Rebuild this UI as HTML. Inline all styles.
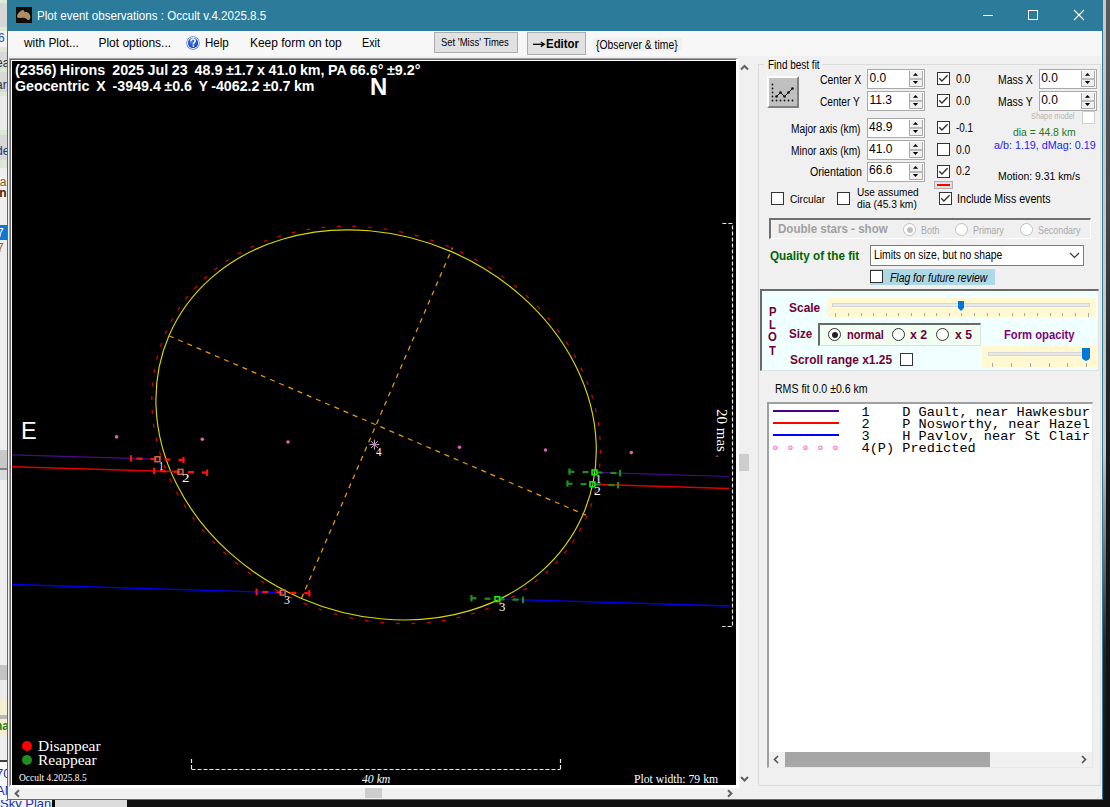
<!DOCTYPE html>
<html><head><meta charset="utf-8">
<style>
*{margin:0;padding:0;box-sizing:border-box}
html,body{width:1110px;height:807px;overflow:hidden;background:#111;font-family:"Liberation Sans",sans-serif;}
.a{position:absolute;white-space:pre;line-height:1}
.r{position:absolute}
.btn{position:absolute;background:#e1e1e1;border:1px solid #adadad}
.spin{position:absolute;width:58px;height:20px;background:#fff;border:1px solid #a9a9a9}
.spin .u{position:absolute;left:41px;top:1px;width:14px;height:16px;background:#f0f0f0;border:1px solid #c8c8c8}
.cb{position:absolute;width:13px;height:13px;border:1px solid #333;background:#fff}
.rd{position:absolute;width:13px;height:13px;border:1px solid #333;border-radius:50%;background:#fff}
</style></head><body>
<!-- background strips -->
<div class="r" style="left:0;top:0px;width:7px;height:3px;background:#dde8d5"></div><div class="r" style="left:0;top:3px;width:7px;height:24px;background:#d6d6d6"></div><div class="r" style="left:0;top:27px;width:7px;height:4px;background:#dde8d5"></div><div class="r" style="left:0;top:31px;width:7px;height:16px;background:#f2f2f2"></div><div class="r" style="left:0;top:47px;width:7px;height:5px;background:#dde8d5"></div><div class="r" style="left:0;top:52px;width:7px;height:16px;background:#d8d8d8"></div><div class="r" style="left:0;top:68px;width:7px;height:4px;background:#dde8d5"></div><div class="r" style="left:0;top:72px;width:7px;height:20px;background:#d8d8d8"></div><div class="r" style="left:0;top:92px;width:7px;height:4px;background:#dde8d5"></div><div class="r" style="left:0;top:96px;width:7px;height:34px;background:#ececec"></div><div class="r" style="left:0;top:130px;width:7px;height:5px;background:#dde8d5"></div><div class="r" style="left:0;top:135px;width:7px;height:25px;background:#d8d8d8"></div><div class="r" style="left:0;top:160px;width:7px;height:8px;background:#dde8d5"></div><div class="r" style="left:0;top:168px;width:7px;height:57px;background:#efefef"></div><div class="r" style="left:0;top:225px;width:7px;height:15px;background:#0a78d4"></div><div class="r" style="left:0;top:240px;width:7px;height:210px;background:#eeeeee"></div><div class="r" style="left:0;top:450px;width:7px;height:18px;background:#c8c8c8"></div><div class="r" style="left:0;top:468px;width:7px;height:2px;background:#808080"></div><div class="r" style="left:0;top:470px;width:7px;height:10px;background:#dadada"></div><div class="r" style="left:0;top:480px;width:7px;height:185px;background:#eeeeee"></div><div class="r" style="left:0;top:665px;width:7px;height:15px;background:#c4c4c4"></div><div class="r" style="left:0;top:680px;width:7px;height:20px;background:#ececec"></div><div class="r" style="left:0;top:700px;width:7px;height:15px;background:#f4efd0"></div><div class="r" style="left:0;top:715px;width:7px;height:4px;background:#b8b8b8"></div><div class="r" style="left:0;top:719px;width:7px;height:16px;background:#f4efd0"></div><div class="r" style="left:0;top:735px;width:7px;height:25px;background:#eeeeee"></div><div class="r" style="left:0;top:760px;width:7px;height:2px;background:#404040"></div><div class="r" style="left:0;top:762px;width:7px;height:38px;background:#f8f8f8"></div><div class="a" style="left:-2px;top:31px;font:12px 'Liberation Sans';color:#2050c0">6</div><div class="a" style="left:-4px;top:56px;font:12px 'Liberation Sans';color:#333">ea</div><div class="a" style="left:-4px;top:78px;font:12px 'Liberation Sans';color:#333">ar</div><div class="a" style="left:-4px;top:144px;font:12px 'Liberation Sans';color:#203080">de</div><div class="a" style="left:-3px;top:175px;font:12px 'Liberation Sans';color:#806020">la</div><div class="a" style="left:-4px;top:186px;font:bold 12px 'Liberation Sans';color:#402010">in</div><div class="a" style="left:-3px;top:226px;font:12px 'Liberation Sans';color:#fff">7</div><div class="a" style="left:-3px;top:241px;font:12px 'Liberation Sans';color:#a06010">7</div><div class="a" style="left:-5px;top:719px;font:bold 12px 'Liberation Sans';color:#208020">na</div><div class="a" style="left:-4px;top:766px;font:13px 'Liberation Sans';color:#2030b0">70</div><div class="a" style="left:-4px;top:783px;font:13px 'Liberation Sans';color:#2030b0">AM</div>
<div class="r" style="left:1103px;top:0;width:3px;height:450px;background:#c8c8c8"></div>
<div class="r" style="left:1106px;top:0;width:4px;height:807px;background:linear-gradient(#5a5a5a 0,#4a4a4a 200px,#2a2a2a 350px,#151515 500px,#111 807px)"></div>
<div class="r" style="left:1103px;top:450px;width:3px;height:357px;background:linear-gradient(#c8c8c8,#222 200px,#111)"></div>
<div class="r" style="left:0;top:800px;width:1110px;height:7px;background:#111"></div><div class="r" style="left:0;top:800px;width:52px;height:7px;background:#f4f4f4;overflow:hidden"><div class="a" style="left:0;top:-4px;font:13px 'Liberation Sans';color:#2030b0">Sky Plane</div></div><div class="r" style="left:52px;top:800px;width:3px;height:7px;background:#000"></div><div class="r" style="left:55px;top:800px;width:72px;height:7px;background:#dcdcdc"></div>

<!-- window -->
<div class="r" style="left:7px;top:0;width:1096px;height:800px;background:#f0f0f0;border:1px solid #2d7b9a;border-top:none"></div>
<div class="r" style="left:7px;top:0;width:1096px;height:31px;background:#2d7b9a"></div>
<svg class="r" style="left:0;top:0" width="1110" height="32"><rect x="983" y="15" width="10" height="1" fill="#fff"/><rect x="1028.5" y="10.5" width="9" height="9" fill="none" stroke="#fff" stroke-width="1"/><path d="M1074 10 L1084 20 M1084 10 L1074 20" stroke="#fff" stroke-width="1.1"/></svg>
<div class="r" style="left:16px;top:7px;width:16px;height:16px;background:#0e0c09"></div>
<svg class="r" style="left:16px;top:7px" width="16" height="16"><path d="M1.1 9.2 C1.5 6.5 4.5 3.5 6.9 3.1 C8 3 8.3 4.5 8.7 5.2 C9.5 4.8 10.5 4.8 11.4 5.2 C13 5.8 14.4 8 14.4 9.9 C14.4 11.5 13.5 13 12.6 12.9 C11 12.8 10 11 8.7 10.9 C6.5 10.8 4.5 11 3 10.9 C1.8 10.8 1 10.2 1.1 9.2 Z" fill="#b08c62"/></svg>
<div class="r" style="left:8px;top:31px;width:1094px;height:25px;background:#f7f7f7"></div>
<svg class="r" style="left:185px;top:35px" width="16" height="16"><defs><radialGradient id="hg" cx="40%" cy="35%" r="70%"><stop offset="0" stop-color="#4a8af0"/><stop offset="1" stop-color="#0a3ab8"/></radialGradient></defs><circle cx="8" cy="8" r="6.7" fill="#4a6cc8"/><circle cx="8" cy="8" r="5.6" fill="none" stroke="#d8e8ff" stroke-width="1.1"/><circle cx="8" cy="8" r="4.9" fill="url(#hg)"/><path d="M5.9 6.2 C5.9 4.6 7.1 4 8.1 4 C9.4 4 10.2 4.8 10.2 5.9 C10.2 7.3 8.6 7.5 8.4 8.8 V9.4" fill="none" stroke="#fff" stroke-width="1.5"/><rect x="7.6" y="10.3" width="1.6" height="1.5" fill="#fff"/></svg>
<div class="btn" style="left:434px;top:32px;width:84px;height:21px"></div>
<div class="btn" style="left:527px;top:32px;width:59px;height:23px"></div><svg class="r" style="left:0;top:0" width="600" height="60"><path d="M533 44.3 H543" stroke="#000" stroke-width="1.3"/><path d="M540.8 42 L544.3 44.3 L540.8 46.6" fill="none" stroke="#000" stroke-width="1.3"/></svg>
<div class="r" style="left:593px;top:38px;width:89px;height:13px;background:#f0f0f0"></div>

<!-- plot panel -->
<div class="r" style="left:9px;top:58px;width:730px;height:730px;border-top:1px solid #a0a0a0;border-left:1px solid #a0a0a0;border-bottom:3px solid #fff;border-right:3px solid #fff;box-shadow:inset 1px 1px 0 #696969, inset 2px 2px 0 #fff"></div>
<div id="plot" class="r" style="left:12px;top:61px;width:724px;height:724px;background:#000;overflow:hidden">
<svg width="724" height="724" viewBox="12 61 724 724" style="position:absolute;left:0;top:0">
<path d="M587.08 515.69L585.45 519.34M581.26 527.80L579.33 531.31M574.43 539.41L572.23 542.75M566.64 550.47L564.17 553.61M557.92 560.91L555.20 563.84M548.30 570.70L545.36 573.40M537.85 579.77L534.70 582.24M526.60 588.09L523.27 590.30M514.61 595.61L511.12 597.57M501.95 602.29L498.33 603.99M488.67 608.11L484.93 609.55M474.84 613.04L471.02 614.21M460.53 617.04L456.63 617.95M445.81 620.10L441.86 620.76M430.75 622.22L426.77 622.61M415.42 623.36L411.42 623.50M399.90 623.54L395.91 623.43M384.27 622.74L380.29 622.39M368.61 620.99L364.65 620.39M352.98 618.27L349.07 617.44M337.47 614.61L333.61 613.55M322.15 610.03L318.36 608.75M307.09 604.55L303.39 603.04M292.37 598.19L288.76 596.47M278.07 590.99L274.56 589.06M264.24 582.98L260.86 580.85M250.96 574.21L247.71 571.88M238.29 564.71L235.19 562.19M226.30 554.53L223.35 551.83M215.03 543.72L212.26 540.84M204.55 532.34L201.96 529.29M194.90 520.43L192.51 517.23M186.14 508.07L183.96 504.71M178.30 495.30L176.35 491.80M171.42 482.19L169.72 478.57M165.53 468.80L164.09 465.07M160.67 455.20L159.50 451.37M156.85 441.45L155.96 437.55M154.10 427.62L153.51 423.66M152.42 413.78L152.14 409.79M151.83 399.98L151.87 395.98M152.33 386.31L152.69 382.33M153.92 372.82L154.60 368.88M156.59 359.58L157.59 355.71M160.33 346.66L161.65 342.88M165.12 334.11L166.75 330.46M170.94 322.00L172.87 318.49M177.77 310.39L179.97 307.05M185.56 299.33L188.03 296.19M194.28 288.89L197.00 285.96M203.90 279.10L206.84 276.40M214.35 270.03L217.50 267.56M225.60 261.71L228.93 259.50M237.59 254.19L241.08 252.23M250.25 247.51L253.87 245.81M263.53 241.69L267.27 240.25M277.36 236.76L281.18 235.59M291.67 232.76L295.57 231.85M306.39 229.70L310.34 229.04M321.45 227.58L325.43 227.19M336.78 226.44L340.78 226.30M352.30 226.26L356.29 226.37M367.93 227.06L371.91 227.41M383.59 228.81L387.55 229.41M399.22 231.53L403.13 232.36M414.73 235.19L418.59 236.25M430.05 239.77L433.84 241.05M445.11 245.25L448.81 246.76M459.83 251.61L463.44 253.33M474.13 258.81L477.64 260.74M487.96 266.82L491.34 268.95M501.24 275.59L504.49 277.92M513.91 285.09L517.01 287.61M525.90 295.27L528.85 297.97M537.17 306.08L539.94 308.96M547.65 317.46L550.24 320.51M557.30 329.37L559.69 332.57M566.06 341.73L568.24 345.09M573.90 354.50L575.85 358.00M580.78 367.61L582.48 371.23M586.67 381.00L588.11 384.73M591.53 394.60L592.70 398.43M595.35 408.35L596.24 412.25M598.10 422.18L598.69 426.14M599.78 436.02L600.06 440.01M600.37 449.82L600.33 453.82M599.87 463.49L599.51 467.47M598.28 476.98L597.60 480.92M595.61 490.22L594.61 494.09M591.87 503.14L590.55 506.92" stroke="#d00000" stroke-width="1.3" fill="none"/>
<ellipse cx="376.1" cy="424.9" rx="225.5" ry="188.9" transform="rotate(23.28 376.1 424.9)" fill="none" stroke="#d8d800" stroke-width="1.15"/>
<line x1="169.0" y1="335.8" x2="586.0" y2="515.2" stroke="#e89a10" stroke-width="1.25" stroke-dasharray="5 5"/>
<line x1="301.4" y1="598.4" x2="452.5" y2="247.5" stroke="#e89a10" stroke-width="1.25" stroke-dasharray="5 5"/>
<line x1="12.0" y1="454.8" x2="157.0" y2="459.2" stroke="#4a0a88" stroke-width="1.2" />
<line x1="595.0" y1="472.4" x2="729.0" y2="476.5" stroke="#4a0a88" stroke-width="1.2" />
<line x1="12.0" y1="466.7" x2="180.5" y2="471.8" stroke="#e00000" stroke-width="1.6" />
<line x1="592.5" y1="484.3" x2="729.0" y2="488.5" stroke="#e00000" stroke-width="1.6" />
<line x1="12.0" y1="584.5" x2="282.7" y2="592.6" stroke="#0000ee" stroke-width="1.35" />
<line x1="497.4" y1="599.1" x2="729.0" y2="606.0" stroke="#0000ee" stroke-width="1.35" />
<line x1="184.4" y1="460.0" x2="130.0" y2="458.4" stroke="#ff1010" stroke-width="2.3" stroke-dasharray="6 8"/>
<line x1="131.0" y1="455.2" x2="131.0" y2="461.6" stroke="#ff1010" stroke-width="2.2"/>
<line x1="183.4" y1="456.8" x2="183.4" y2="463.2" stroke="#ff1010" stroke-width="2.2"/>
<rect x="155.1" y="456.8" width="4.8" height="4.8" fill="none" stroke="#c86450" stroke-width="1.6"/>
<line x1="208.0" y1="472.7" x2="153.0" y2="471.0" stroke="#ff1010" stroke-width="2.3" stroke-dasharray="6 8"/>
<line x1="154.0" y1="467.8" x2="154.0" y2="474.2" stroke="#ff1010" stroke-width="2.2"/>
<line x1="207.0" y1="469.5" x2="207.0" y2="475.9" stroke="#ff1010" stroke-width="2.2"/>
<rect x="178.1" y="469.4" width="4.8" height="4.8" fill="none" stroke="#c86450" stroke-width="1.6"/>
<line x1="310.3" y1="593.4" x2="255.6" y2="591.8" stroke="#ff1010" stroke-width="2.3" stroke-dasharray="6 8"/>
<line x1="256.6" y1="588.6" x2="256.6" y2="595.0" stroke="#ff1010" stroke-width="2.2"/>
<line x1="309.3" y1="590.2" x2="309.3" y2="596.6" stroke="#ff1010" stroke-width="2.2"/>
<rect x="280.3" y="590.2" width="4.8" height="4.8" fill="none" stroke="#c86450" stroke-width="1.6"/>
<line x1="568.5" y1="471.6" x2="621.0" y2="473.2" stroke="#228b22" stroke-width="2.3" stroke-dasharray="6 8"/>
<line x1="569.5" y1="468.4" x2="569.5" y2="474.8" stroke="#228b22" stroke-width="2.2"/>
<line x1="620.0" y1="470.0" x2="620.0" y2="476.4" stroke="#228b22" stroke-width="2.2"/>
<rect x="592.1" y="470.0" width="4.8" height="4.8" fill="none" stroke="#10f010" stroke-width="1.6"/>
<line x1="566.5" y1="483.6" x2="619.0" y2="485.2" stroke="#228b22" stroke-width="2.3" stroke-dasharray="6 8"/>
<line x1="567.5" y1="480.4" x2="567.5" y2="486.8" stroke="#228b22" stroke-width="2.2"/>
<line x1="618.0" y1="482.0" x2="618.0" y2="488.4" stroke="#228b22" stroke-width="2.2"/>
<rect x="590.0" y="481.9" width="4.8" height="4.8" fill="none" stroke="#10f010" stroke-width="1.6"/>
<line x1="470.5" y1="598.2" x2="524.0" y2="599.9" stroke="#228b22" stroke-width="2.3" stroke-dasharray="6 8"/>
<line x1="471.5" y1="595.0" x2="471.5" y2="601.4" stroke="#228b22" stroke-width="2.2"/>
<line x1="523.0" y1="596.7" x2="523.0" y2="603.1" stroke="#228b22" stroke-width="2.2"/>
<rect x="495.0" y="596.7" width="4.8" height="4.8" fill="none" stroke="#10f010" stroke-width="1.6"/>
<circle cx="116.6" cy="436.9" r="1.8" fill="#e060b0"/>
<circle cx="202.3" cy="439.3" r="1.8" fill="#e060b0"/>
<circle cx="288" cy="442" r="1.8" fill="#e060b0"/>
<circle cx="459.5" cy="447.2" r="1.8" fill="#e060b0"/>
<circle cx="545.5" cy="450" r="1.8" fill="#e060b0"/>
<circle cx="631.3" cy="452.6" r="1.8" fill="#e060b0"/>
<rect x="715.8" y="455.6" width="2.6" height="1.1" fill="#c050a0"/>
<line x1="369.4" y1="444.6" x2="379.4" y2="444.6" stroke="#b8b8c8" stroke-width="1"/>
<line x1="370.9" y1="441.1" x2="377.9" y2="448.1" stroke="#b8b8c8" stroke-width="1"/>
<line x1="374.4" y1="439.6" x2="374.4" y2="449.6" stroke="#b8b8c8" stroke-width="1"/>
<line x1="377.9" y1="441.1" x2="370.9" y2="448.1" stroke="#b8b8c8" stroke-width="1"/>
<circle cx="374.4" cy="444.6" r="1.8" fill="#f070b0"/>
<path d="M722.4 223.5 H732.5 V626.5 H722.3" fill="none" stroke="#e8e8e8" stroke-width="1.2" stroke-dasharray="4 2"/>
<path d="M191.5 759 V769.5 M191.5 769.5 H560.5 M560.5 759 V769.5" fill="none" stroke="#e8e8e8" stroke-width="1.2" stroke-dasharray="4 2"/>
</svg>
<div class="a" style="left:718.5px;top:348px;font:15px 'Liberation Serif';line-height:18px;color:#fff;transform:rotate(90deg);transform-origin:0 0">20 mas</div>
<div class="r" style="left:10px;top:680px;width:10px;height:10px;border-radius:50%;background:#ff0000"></div>
<div class="r" style="left:10px;top:694px;width:10px;height:10px;border-radius:50%;background:#228b22"></div>
</div>

<!-- scrollbars of plot -->
<div class="r" style="left:739px;top:58px;width:16px;height:730px;background:#f0f0f0"></div>
<div class="r" style="left:739px;top:454px;width:10px;height:17px;background:#cdcdcd"></div>
<div class="r" style="left:8px;top:788px;width:731px;height:11px;background:#f0f0f0"></div>
<div class="r" style="left:365px;top:788px;width:17px;height:10px;background:#cdcdcd"></div>
<svg class="r" style="left:0;top:0" width="1110" height="807">
 <path d="M741 69.5 L744.5 66 L748 69.5" fill="none" stroke="#606060" stroke-width="2"/>
 <path d="M741 777 L744.5 780.5 L748 777" fill="none" stroke="#606060" stroke-width="2"/>
 <path d="M19 790.3 L15.6 793.5 L19 796.7" fill="none" stroke="#606060" stroke-width="2"/>
 <path d="M728 790.3 L731.4 793.5 L728 796.7" fill="none" stroke="#606060" stroke-width="2"/>
</svg>

<!-- right group box border -->
<div class="r" style="left:758px;top:64px;width:343px;height:722px;border:1px solid #dcdcdc"></div>
<div class="r" style="left:764px;top:58px;width:58px;height:12px;background:#f0f0f0"></div>

<!-- chart button -->
<div class="r" style="left:767px;top:76px;width:32px;height:32px;background:#c0c0c0;border-top:2px solid #fff;border-left:2px solid #fff;border-right:2px solid #808080;border-bottom:2px solid #808080"></div>
<svg class="r" style="left:767px;top:76px" width="32" height="32">
 <g fill="#111"><circle cx="5.5" cy="8.5" r="0.9"/><circle cx="5.5" cy="12.5" r="0.9"/><circle cx="5.5" cy="16.5" r="0.9"/><circle cx="5.5" cy="20.5" r="0.9"/><circle cx="5.5" cy="24.5" r="0.9"/>
 <circle cx="9.5" cy="24.5" r="0.9"/><circle cx="13.5" cy="24.5" r="0.9"/><circle cx="17.5" cy="24.5" r="0.9"/><circle cx="21.5" cy="24.5" r="0.9"/><circle cx="25.5" cy="24.5" r="0.9"/></g>
 <path d="M9.5 20.5 L13.5 16.5 L17.5 20.5 L21.5 16.5 L25.5 12.5" fill="none" stroke="#111" stroke-width="1"/>
 <g fill="#111"><circle cx="9.5" cy="20.5" r="1.3"/><circle cx="13.5" cy="16.5" r="1.3"/><circle cx="17.5" cy="20.5" r="1.3"/><circle cx="21.5" cy="16.5" r="1.3"/><circle cx="25.5" cy="12.5" r="1.3"/></g>
</svg>

<div class="spin" style="left:867px;top:69px"><svg class="r" style="left:41px;top:1px" width="14" height="16"><rect x="0" y="0" width="14" height="16" fill="#f0f0f0"/><path d="M0.5 0 V15.5 H13.5 V0" fill="none" stroke="#a8a8a8"/><rect x="0" y="7.2" width="14" height="1.6" fill="#b0b0b0"/><path d="M3.9 4.8 L6.5 1.9 L9.1 4.8 Z" fill="#000"/><path d="M3.9 10 L6.5 12.9 L9.1 10 Z" fill="#000"/></svg></div>
<div class="spin" style="left:867px;top:91px"><svg class="r" style="left:41px;top:1px" width="14" height="16"><rect x="0" y="0" width="14" height="16" fill="#f0f0f0"/><path d="M0.5 0 V15.5 H13.5 V0" fill="none" stroke="#a8a8a8"/><rect x="0" y="7.2" width="14" height="1.6" fill="#b0b0b0"/><path d="M3.9 4.8 L6.5 1.9 L9.1 4.8 Z" fill="#000"/><path d="M3.9 10 L6.5 12.9 L9.1 10 Z" fill="#000"/></svg></div>
<div class="spin" style="left:867px;top:118px"><svg class="r" style="left:41px;top:1px" width="14" height="16"><rect x="0" y="0" width="14" height="16" fill="#f0f0f0"/><path d="M0.5 0 V15.5 H13.5 V0" fill="none" stroke="#a8a8a8"/><rect x="0" y="7.2" width="14" height="1.6" fill="#b0b0b0"/><path d="M3.9 4.8 L6.5 1.9 L9.1 4.8 Z" fill="#000"/><path d="M3.9 10 L6.5 12.9 L9.1 10 Z" fill="#000"/></svg></div>
<div class="spin" style="left:867px;top:140px"><svg class="r" style="left:41px;top:1px" width="14" height="16"><rect x="0" y="0" width="14" height="16" fill="#f0f0f0"/><path d="M0.5 0 V15.5 H13.5 V0" fill="none" stroke="#a8a8a8"/><rect x="0" y="7.2" width="14" height="1.6" fill="#b0b0b0"/><path d="M3.9 4.8 L6.5 1.9 L9.1 4.8 Z" fill="#000"/><path d="M3.9 10 L6.5 12.9 L9.1 10 Z" fill="#000"/></svg></div>
<div class="spin" style="left:867px;top:162px"><svg class="r" style="left:41px;top:1px" width="14" height="16"><rect x="0" y="0" width="14" height="16" fill="#f0f0f0"/><path d="M0.5 0 V15.5 H13.5 V0" fill="none" stroke="#a8a8a8"/><rect x="0" y="7.2" width="14" height="1.6" fill="#b0b0b0"/><path d="M3.9 4.8 L6.5 1.9 L9.1 4.8 Z" fill="#000"/><path d="M3.9 10 L6.5 12.9 L9.1 10 Z" fill="#000"/></svg></div>
<div class="spin" style="left:1039px;top:69px"><svg class="r" style="left:41px;top:1px" width="14" height="16"><rect x="0" y="0" width="14" height="16" fill="#f0f0f0"/><path d="M0.5 0 V15.5 H13.5 V0" fill="none" stroke="#a8a8a8"/><rect x="0" y="7.2" width="14" height="1.6" fill="#b0b0b0"/><path d="M3.9 4.8 L6.5 1.9 L9.1 4.8 Z" fill="#000"/><path d="M3.9 10 L6.5 12.9 L9.1 10 Z" fill="#000"/></svg></div>
<div class="spin" style="left:1039px;top:91px"><svg class="r" style="left:41px;top:1px" width="14" height="16"><rect x="0" y="0" width="14" height="16" fill="#f0f0f0"/><path d="M0.5 0 V15.5 H13.5 V0" fill="none" stroke="#a8a8a8"/><rect x="0" y="7.2" width="14" height="1.6" fill="#b0b0b0"/><path d="M3.9 4.8 L6.5 1.9 L9.1 4.8 Z" fill="#000"/><path d="M3.9 10 L6.5 12.9 L9.1 10 Z" fill="#000"/></svg></div>

<div class="cb" style="left:937px;top:72px"></div>
<div class="cb" style="left:937px;top:94px"></div>
<div class="cb" style="left:937px;top:121px"></div>
<div class="cb" style="left:937px;top:143px"></div>
<div class="cb" style="left:937px;top:165px"></div>
<div class="r" style="left:934px;top:181px;width:19px;height:8px;background:#e1e1e1;border:1px solid #b0b0b0"></div>
<div class="r" style="left:937px;top:184px;width:13px;height:2px;background:#ff0000"></div>
<div class="r" style="left:1082px;top:111px;width:13px;height:13px;background:#fff;border:1px solid #d0d0d0"></div>

<div class="cb" style="left:771px;top:192px"></div>
<div class="cb" style="left:837px;top:192px"></div>
<div class="cb" style="left:939px;top:192px"></div>

<svg class="r" style="left:937px;top:72px" width="13" height="13"><path d="M2.2 6.3 L4.9 9.1 L10.6 3.3" fill="none" stroke="#333" stroke-width="1.4"/></svg><svg class="r" style="left:937px;top:94px" width="13" height="13"><path d="M2.2 6.3 L4.9 9.1 L10.6 3.3" fill="none" stroke="#333" stroke-width="1.4"/></svg><svg class="r" style="left:937px;top:121px" width="13" height="13"><path d="M2.2 6.3 L4.9 9.1 L10.6 3.3" fill="none" stroke="#333" stroke-width="1.4"/></svg><svg class="r" style="left:937px;top:165px" width="13" height="13"><path d="M2.2 6.3 L4.9 9.1 L10.6 3.3" fill="none" stroke="#333" stroke-width="1.4"/></svg><svg class="r" style="left:939px;top:192px" width="13" height="13"><path d="M2.2 6.3 L4.9 9.1 L10.6 3.3" fill="none" stroke="#333" stroke-width="1.4"/></svg>
<!-- double stars -->
<div class="r" style="left:769px;top:218px;width:322px;height:21px;border-top:2px solid #707070;border-left:2px solid #707070;border-right:1px solid #fff;border-bottom:1px solid #fff"></div>
<div class="rd" style="left:903px;top:223px;border-color:#c0c0c0"></div>
<div class="r" style="left:906.5px;top:226.5px;width:6px;height:6px;border-radius:50%;background:#c0c0c0"></div>
<div class="rd" style="left:955px;top:223px;border-color:#c0c0c0"></div>
<div class="rd" style="left:1020px;top:223px;border-color:#c0c0c0"></div>

<!-- quality -->
<div class="r" style="left:870px;top:245px;width:214px;height:21px;background:#fff;border:1px solid #7a7a7a"></div>
<svg class="r" style="left:1068px;top:250px" width="14" height="10"><path d="M2 3 L6.5 7.5 L11 3" fill="none" stroke="#333" stroke-width="1.2"/></svg>
<div class="r" style="left:870px;top:269px;width:125px;height:16px;background:#add8e6"></div>
<div class="cb" style="left:870px;top:270px"></div>

<!-- PLOT panel -->
<div class="r" style="left:760px;top:289px;width:339px;height:82px;background:#f0ffff;border-top:2px solid #696969;border-left:2px solid #696969;border-right:1px solid #e0e0e0;border-bottom:1px solid #e0e0e0"></div>
<div class="r" style="left:827px;top:298px;width:269px;height:19px;background:#fff8d0"></div>
<div class="r" style="left:832px;top:303px;width:258px;height:4px;background:#e7eaea;border:1px solid #d6d6d6"></div>
<div class="r" style="left:818px;top:323px;width:163px;height:23px;background:#f0fff0;border-top:2px solid #696969;border-left:2px solid #696969;border-right:1px solid #e0e0e0;border-bottom:1px solid #e0e0e0"></div>
<div class="rd" style="left:828px;top:328px"></div>
<div class="r" style="left:831.5px;top:331.5px;width:6px;height:6px;border-radius:50%;background:#222"></div>
<div class="rd" style="left:892px;top:328px"></div>
<div class="rd" style="left:936px;top:328px"></div>
<div class="r" style="left:982px;top:346px;width:115px;height:21px;background:#fff8d0"></div>
<div class="r" style="left:988px;top:352px;width:98px;height:4px;background:#e7eaea;border:1px solid #d6d6d6"></div>
<div class="cb" style="left:900px;top:353px"></div>
<svg class="r" style="left:0;top:0" width="1110" height="807"><rect x="835" y="313" width="1" height="4" fill="#a8a8a8"/><rect x="848" y="313" width="1" height="3" fill="#a8a8a8"/><rect x="861" y="313" width="1" height="3" fill="#a8a8a8"/><rect x="873" y="313" width="1" height="3" fill="#a8a8a8"/><rect x="886" y="313" width="1" height="3" fill="#a8a8a8"/><rect x="898" y="313" width="1" height="3" fill="#a8a8a8"/><rect x="911" y="313" width="1" height="3" fill="#a8a8a8"/><rect x="924" y="313" width="1" height="3" fill="#a8a8a8"/><rect x="936" y="313" width="1" height="3" fill="#a8a8a8"/><rect x="949" y="313" width="1" height="3" fill="#a8a8a8"/><rect x="961" y="313" width="1" height="3" fill="#a8a8a8"/><rect x="974" y="313" width="1" height="3" fill="#a8a8a8"/><rect x="987" y="313" width="1" height="3" fill="#a8a8a8"/><rect x="999" y="313" width="1" height="3" fill="#a8a8a8"/><rect x="1012" y="313" width="1" height="3" fill="#a8a8a8"/><rect x="1024" y="313" width="1" height="3" fill="#a8a8a8"/><rect x="1037" y="313" width="1" height="3" fill="#a8a8a8"/><rect x="1050" y="313" width="1" height="3" fill="#a8a8a8"/><rect x="1062" y="313" width="1" height="3" fill="#a8a8a8"/><rect x="1075" y="313" width="1" height="3" fill="#a8a8a8"/><rect x="1088" y="313" width="1" height="4" fill="#a8a8a8"/><rect x="992" y="363" width="1" height="4" fill="#a8a8a8"/><rect x="1011" y="363" width="1" height="4" fill="#a8a8a8"/><rect x="1030" y="363" width="1" height="4" fill="#a8a8a8"/><rect x="1049" y="363" width="1" height="4" fill="#a8a8a8"/><rect x="1067" y="363" width="1" height="4" fill="#a8a8a8"/><rect x="1086" y="363" width="1" height="4" fill="#a8a8a8"/><path d="M958 301 H964 V308 L961 311 L958 308 Z" fill="#0078d7"/><path d="M1082 348 H1090 V357.5 Q1090 359 1088 360 L1086 361 L1084 360 Q1082 359 1082 357.5 Z" fill="#0078d7"/></svg>

<!-- list -->
<div class="r" style="left:767px;top:402px;width:326px;height:366px;background:#fff;border-top:2px solid #a0a0a0;border-left:2px solid #a0a0a0;border-right:1px solid #e8e8e8;border-bottom:1px solid #e8e8e8"></div>
<div class="r" style="left:773px;top:410px;width:66px;height:2px;background:#4b0082"></div>
<div class="r" style="left:773px;top:422px;width:66px;height:2px;background:#ff0000"></div>
<div class="r" style="left:773px;top:434px;width:66px;height:2px;background:#0000ff"></div><svg class="r" style="left:0;top:0" width="1110" height="807"><circle cx="775.3" cy="447.7" r="1.7" fill="none" stroke="#ff70c0" stroke-width="1.1"/><circle cx="790.4" cy="447.7" r="1.7" fill="none" stroke="#ff70c0" stroke-width="1.1"/><circle cx="805.4" cy="447.7" r="1.7" fill="none" stroke="#ff70c0" stroke-width="1.1"/><circle cx="820.4" cy="447.7" r="1.7" fill="none" stroke="#ff70c0" stroke-width="1.1"/><circle cx="835.4" cy="447.7" r="1.7" fill="none" stroke="#ff70c0" stroke-width="1.1"/></svg>
<div class="a" style="left:861.5px;top:407px;font:13.6px 'Liberation Mono';line-height:12px">1    D Gault, near Hawkesbur
2    P Nosworthy, near Hazel
3    H Pavlov, near St Clair
4(P) Predicted</div>
<div class="r" style="left:769px;top:752px;width:323px;height:15px;background:#f0f0f0"></div>
<div class="r" style="left:785px;top:752px;width:205px;height:15px;background:#a6a6a6"></div>
<svg class="r" style="left:0;top:0" width="1110" height="807">
 <path d="M778 756 L774.5 759.5 L778 763" fill="none" stroke="#505050" stroke-width="1.6"/>
 <path d="M1082 756 L1085.5 759.5 L1082 763" fill="none" stroke="#505050" stroke-width="1.6"/>
</svg>
<div class="a" style="left:37.20px;top:9px;font:normal normal 12px 'Liberation Sans';line-height:14px;color:#fff;transform:scaleX(0.9660);transform-origin:0 0;">Plot event observations : Occult v.4.2025.8.5</div>
<div class="a" style="left:23.99px;top:36px;font:normal normal 12px 'Liberation Sans';line-height:14px;color:#000;transform:scaleX(0.9907);transform-origin:0 0;">with Plot...</div>
<div class="a" style="left:98.40px;top:36px;font:normal normal 12px 'Liberation Sans';line-height:14px;color:#000;">Plot options...</div>
<div class="a" style="left:204.60px;top:36px;font:normal normal 12px 'Liberation Sans';line-height:14px;color:#000;transform:scaleX(0.9638);transform-origin:0 0;">Help</div>
<div class="a" style="left:250.30px;top:36px;font:normal normal 12px 'Liberation Sans';line-height:14px;color:#000;transform:scaleX(0.9959);transform-origin:0 0;">Keep form on top</div>
<div class="a" style="left:362.20px;top:36px;font:normal normal 12px 'Liberation Sans';line-height:14px;color:#000;transform:scaleX(0.8950);transform-origin:0 0;">Exit</div>
<div class="a" style="left:441.00px;top:36px;font:normal normal 10.5px 'Liberation Sans';line-height:13px;color:#000;transform:scaleX(0.9025);transform-origin:0 0;">Set 'Miss' Times</div>
<div class="a" style="left:545.80px;top:36px;font:normal bold 13px 'Liberation Sans';line-height:16px;color:#000;transform:scaleX(0.8801);transform-origin:0 0;">Editor</div>
<div class="a" style="left:595.90px;top:38px;font:normal normal 12px 'Liberation Sans';line-height:14px;color:#000;transform:scaleX(0.8617);transform-origin:0 0;">{Observer &amp; time}</div>
<div class="a" style="left:15.40px;top:62px;font:normal bold 14px 'Liberation Sans';line-height:17px;color:#fff;transform:scaleX(1.0231);transform-origin:0 0;word-spacing:-0.5px;">(2356) Hirons  2025 Jul 23  48.9 ±1.7 x 41.0 km, PA 66.6° ±9.2°</div>
<div class="a" style="left:15.40px;top:78px;font:normal bold 14px 'Liberation Sans';line-height:17px;color:#fff;transform:scaleX(1.0164);transform-origin:0 0;word-spacing:-0.5px;">Geocentric  X  -3949.4 ±0.6  Y -4062.2 ±0.7 km</div>
<div class="a" style="left:370.16px;top:73px;font:normal bold 23px 'Liberation Sans';line-height:28px;color:#fff;transform:scaleX(1.0400);transform-origin:0 0;">N</div>
<div class="a" style="left:20.68px;top:417px;font:normal normal 23px 'Liberation Sans';line-height:28px;color:#fff;transform:scaleX(1.0214);transform-origin:0 0;">E</div>
<div class="a" style="left:38.10px;top:737px;font:normal normal 15px 'Liberation Serif';line-height:18px;color:#fff;transform:scaleX(1.0294);transform-origin:0 0;">Disappear</div>
<div class="a" style="left:38.10px;top:751px;font:normal normal 15px 'Liberation Serif';line-height:18px;color:#fff;transform:scaleX(1.0347);transform-origin:0 0;">Reappear</div>
<div class="a" style="left:19.20px;top:772px;font:normal normal 10px 'Liberation Serif';line-height:12px;color:#fff;transform:scaleX(0.9434);transform-origin:0 0;">Occult 4.2025.8.5</div>
<div class="a" style="left:362.20px;top:772px;font:italic normal 12px 'Liberation Serif';line-height:14px;color:#fff;transform:scaleX(0.9752);transform-origin:0 0;">40 km</div>
<div class="a" style="left:633.90px;top:772px;font:normal normal 12px 'Liberation Serif';line-height:14px;color:#fff;transform:scaleX(0.9735);transform-origin:0 0;">Plot width: 79 km</div>
<div class="a" style="left:159.30px;top:458px;font:normal normal 13px 'Liberation Serif';line-height:16px;color:#fff;transform:scaleX(0.7000);transform-origin:0 0;">1</div>
<div class="a" style="left:181.50px;top:470px;font:normal normal 13px 'Liberation Serif';line-height:16px;color:#fff;transform:scaleX(1.1500);transform-origin:0 0;">2</div>
<div class="a" style="left:284.00px;top:592px;font:normal normal 13px 'Liberation Serif';line-height:16px;color:#fff;transform:scaleX(0.9167);transform-origin:0 0;">3</div>
<div class="a" style="left:376.00px;top:444px;font:normal normal 13px 'Liberation Serif';line-height:16px;color:#fff;transform:scaleX(0.8571);transform-origin:0 0;">4</div>
<div class="a" style="left:596.20px;top:471px;font:normal normal 13px 'Liberation Serif';line-height:16px;color:#fff;transform:scaleX(0.8000);transform-origin:0 0;">1</div>
<div class="a" style="left:593.70px;top:483px;font:normal normal 13px 'Liberation Serif';line-height:16px;color:#fff;transform:scaleX(1.0500);transform-origin:0 0;">2</div>
<div class="a" style="left:499.10px;top:599px;font:normal normal 13px 'Liberation Serif';line-height:16px;color:#fff;transform:scaleX(0.9833);transform-origin:0 0;">3</div>
<div class="a" style="left:767.70px;top:58px;font:normal normal 12px 'Liberation Sans';line-height:14px;color:#000;transform:scaleX(0.8326);transform-origin:0 0;">Find best fit</div>
<div class="a" style="left:819.60px;top:73px;font:normal normal 12px 'Liberation Sans';line-height:14px;color:#000;transform:scaleX(0.8701);transform-origin:0 0;">Center X</div>
<div class="a" style="left:819.60px;top:95px;font:normal normal 12px 'Liberation Sans';line-height:14px;color:#000;transform:scaleX(0.8426);transform-origin:0 0;">Center Y</div>
<div class="a" style="left:791.30px;top:122px;font:normal normal 12px 'Liberation Sans';line-height:14px;color:#000;transform:scaleX(0.8475);transform-origin:0 0;">Major axis (km)</div>
<div class="a" style="left:791.30px;top:144px;font:normal normal 12px 'Liberation Sans';line-height:14px;color:#000;transform:scaleX(0.8475);transform-origin:0 0;">Minor axis (km)</div>
<div class="a" style="left:809.60px;top:165px;font:normal normal 12px 'Liberation Sans';line-height:14px;color:#000;transform:scaleX(0.8824);transform-origin:0 0;">Orientation</div>
<div class="a" style="left:869.50px;top:71px;font:normal normal 12px 'Liberation Sans';line-height:14px;color:#000;">0.0</div>
<div class="a" style="left:869.50px;top:93px;font:normal normal 12px 'Liberation Sans';line-height:14px;color:#000;">11.3</div>
<div class="a" style="left:869.10px;top:120px;font:normal normal 12px 'Liberation Sans';line-height:14px;color:#000;">48.9</div>
<div class="a" style="left:869.10px;top:142px;font:normal normal 12px 'Liberation Sans';line-height:14px;color:#000;">41.0</div>
<div class="a" style="left:869.10px;top:163px;font:normal normal 12px 'Liberation Sans';line-height:14px;color:#000;">66.6</div>
<div class="a" style="left:956.10px;top:72px;font:normal normal 12px 'Liberation Sans';line-height:14px;color:#000;transform:scaleX(0.8584);transform-origin:0 0;">0.0</div>
<div class="a" style="left:956.10px;top:94px;font:normal normal 12px 'Liberation Sans';line-height:14px;color:#000;transform:scaleX(0.8584);transform-origin:0 0;">0.0</div>
<div class="a" style="left:955.70px;top:121px;font:normal normal 12px 'Liberation Sans';line-height:14px;color:#000;transform:scaleX(0.8237);transform-origin:0 0;">-0.1</div>
<div class="a" style="left:956.10px;top:143px;font:normal normal 12px 'Liberation Sans';line-height:14px;color:#000;transform:scaleX(0.8584);transform-origin:0 0;">0.0</div>
<div class="a" style="left:956.10px;top:164px;font:normal normal 12px 'Liberation Sans';line-height:14px;color:#000;transform:scaleX(0.8584);transform-origin:0 0;">0.2</div>
<div class="a" style="left:998.40px;top:73px;font:normal normal 12px 'Liberation Sans';line-height:14px;color:#000;transform:scaleX(0.8699);transform-origin:0 0;">Mass X</div>
<div class="a" style="left:998.40px;top:95px;font:normal normal 12px 'Liberation Sans';line-height:14px;color:#000;transform:scaleX(0.8699);transform-origin:0 0;">Mass Y</div>
<div class="a" style="left:1041.20px;top:71px;font:normal normal 12px 'Liberation Sans';line-height:14px;color:#000;">0.0</div>
<div class="a" style="left:1041.20px;top:93px;font:normal normal 12px 'Liberation Sans';line-height:14px;color:#000;">0.0</div>
<div class="a" style="left:1031.00px;top:111px;font:normal normal 8.5px 'Liberation Sans';line-height:10px;color:#b4b4b4;transform:scaleX(0.8665);transform-origin:0 0;">Shape model</div>
<div class="a" style="left:1013.30px;top:126px;font:normal normal 11px 'Liberation Sans';line-height:13px;color:#1e781e;transform:scaleX(0.9429);transform-origin:0 0;">dia = 44.8 km</div>
<div class="a" style="left:994.00px;top:139px;font:normal normal 11px 'Liberation Sans';line-height:13px;color:#2424f0;transform:scaleX(0.9774);transform-origin:0 0;">a/b: 1.19, dMag: 0.19</div>
<div class="a" style="left:998.40px;top:170px;font:normal normal 11px 'Liberation Sans';line-height:13px;color:#000;transform:scaleX(0.9460);transform-origin:0 0;">Motion: 9.31 km/s</div>
<div class="a" style="left:789.50px;top:192px;font:normal normal 11.5px 'Liberation Sans';line-height:14px;color:#000;transform:scaleX(0.8847);transform-origin:0 0;">Circular</div>
<div class="a" style="left:856.60px;top:186px;font:normal normal 11px 'Liberation Sans';line-height:13px;color:#000;transform:scaleX(0.9161);transform-origin:0 0;">Use assumed</div>
<div class="a" style="left:856.60px;top:198px;font:normal normal 11px 'Liberation Sans';line-height:13px;color:#000;transform:scaleX(0.9319);transform-origin:0 0;">dia (45.3 km)</div>
<div class="a" style="left:957.41px;top:192px;font:normal normal 12px 'Liberation Sans';line-height:14px;color:#000;transform:scaleX(0.8881);transform-origin:0 0;">Include Miss events</div>
<div class="a" style="left:777.70px;top:222px;font:normal bold 12px 'Liberation Sans';line-height:14px;color:#a0a0a0;transform:scaleX(0.9618);transform-origin:0 0;">Double stars - show</div>
<div class="a" style="left:921.00px;top:224px;font:normal normal 10.5px 'Liberation Sans';line-height:13px;color:#a8a8a8;transform:scaleX(0.8502);transform-origin:0 0;">Both</div>
<div class="a" style="left:973.10px;top:224px;font:normal normal 10.5px 'Liberation Sans';line-height:13px;color:#a8a8a8;transform:scaleX(0.8506);transform-origin:0 0;">Primary</div>
<div class="a" style="left:1038.10px;top:224px;font:normal normal 10.5px 'Liberation Sans';line-height:13px;color:#a8a8a8;transform:scaleX(0.8440);transform-origin:0 0;">Secondary</div>
<div class="a" style="left:770.00px;top:249px;font:normal bold 12.5px 'Liberation Sans';line-height:15px;color:#006400;transform:scaleX(0.9378);transform-origin:0 0;">Quality of the fit</div>
<div class="a" style="left:873.50px;top:248px;font:normal normal 12px 'Liberation Sans';line-height:14px;color:#000;transform:scaleX(0.8620);transform-origin:0 0;">Limits on size, but no shape</div>
<div class="a" style="left:890.00px;top:271px;font:italic normal 12px 'Liberation Sans';line-height:14px;color:#000;transform:scaleX(0.8637);transform-origin:0 0;">Flag for future review</div>
<div class="a" style="left:788.60px;top:301px;font:normal bold 12.5px 'Liberation Sans';line-height:15px;color:#700038;transform:scaleX(0.9568);transform-origin:0 0;">Scale</div>
<div class="a" style="left:788.60px;top:327px;font:normal bold 12.5px 'Liberation Sans';line-height:15px;color:#700038;transform:scaleX(0.9258);transform-origin:0 0;">Size</div>
<div class="a" style="left:846.60px;top:328px;font:normal bold 12.5px 'Liberation Sans';line-height:15px;color:#700038;transform:scaleX(0.8859);transform-origin:0 0;">normal</div>
<div class="a" style="left:910.30px;top:328px;font:normal bold 12.5px 'Liberation Sans';line-height:15px;color:#700038;transform:scaleX(0.9871);transform-origin:0 0;">x 2</div>
<div class="a" style="left:955.00px;top:328px;font:normal bold 12.5px 'Liberation Sans';line-height:15px;color:#700038;transform:scaleX(0.9756);transform-origin:0 0;">x 5</div>
<div class="a" style="left:1003.60px;top:328px;font:normal bold 12.5px 'Liberation Sans';line-height:15px;color:#800080;transform:scaleX(0.8990);transform-origin:0 0;">Form opacity</div>
<div class="a" style="left:789.90px;top:353px;font:normal bold 12.5px 'Liberation Sans';line-height:15px;color:#700038;transform:scaleX(0.9538);transform-origin:0 0;">Scroll range x1.25</div>
<div class="a" style="left:768.50px;top:305px;font:normal bold 12px 'Liberation Sans';line-height:14px;color:#700038;transform:scaleX(0.9375);transform-origin:0 0;">P</div>
<div class="a" style="left:769.00px;top:318px;font:normal bold 12px 'Liberation Sans';line-height:14px;color:#700038;transform:scaleX(0.9286);transform-origin:0 0;">L</div>
<div class="a" style="left:768.00px;top:330px;font:normal bold 12px 'Liberation Sans';line-height:14px;color:#700038;transform:scaleX(0.9444);transform-origin:0 0;">O</div>
<div class="a" style="left:768.50px;top:344px;font:normal bold 12px 'Liberation Sans';line-height:14px;color:#700038;transform:scaleX(0.9375);transform-origin:0 0;">T</div>
<div class="a" style="left:774.60px;top:382px;font:normal normal 12px 'Liberation Sans';line-height:14px;color:#000;transform:scaleX(0.8795);transform-origin:0 0;">RMS fit 0.0 ±0.6 km</div>
</body></html>
